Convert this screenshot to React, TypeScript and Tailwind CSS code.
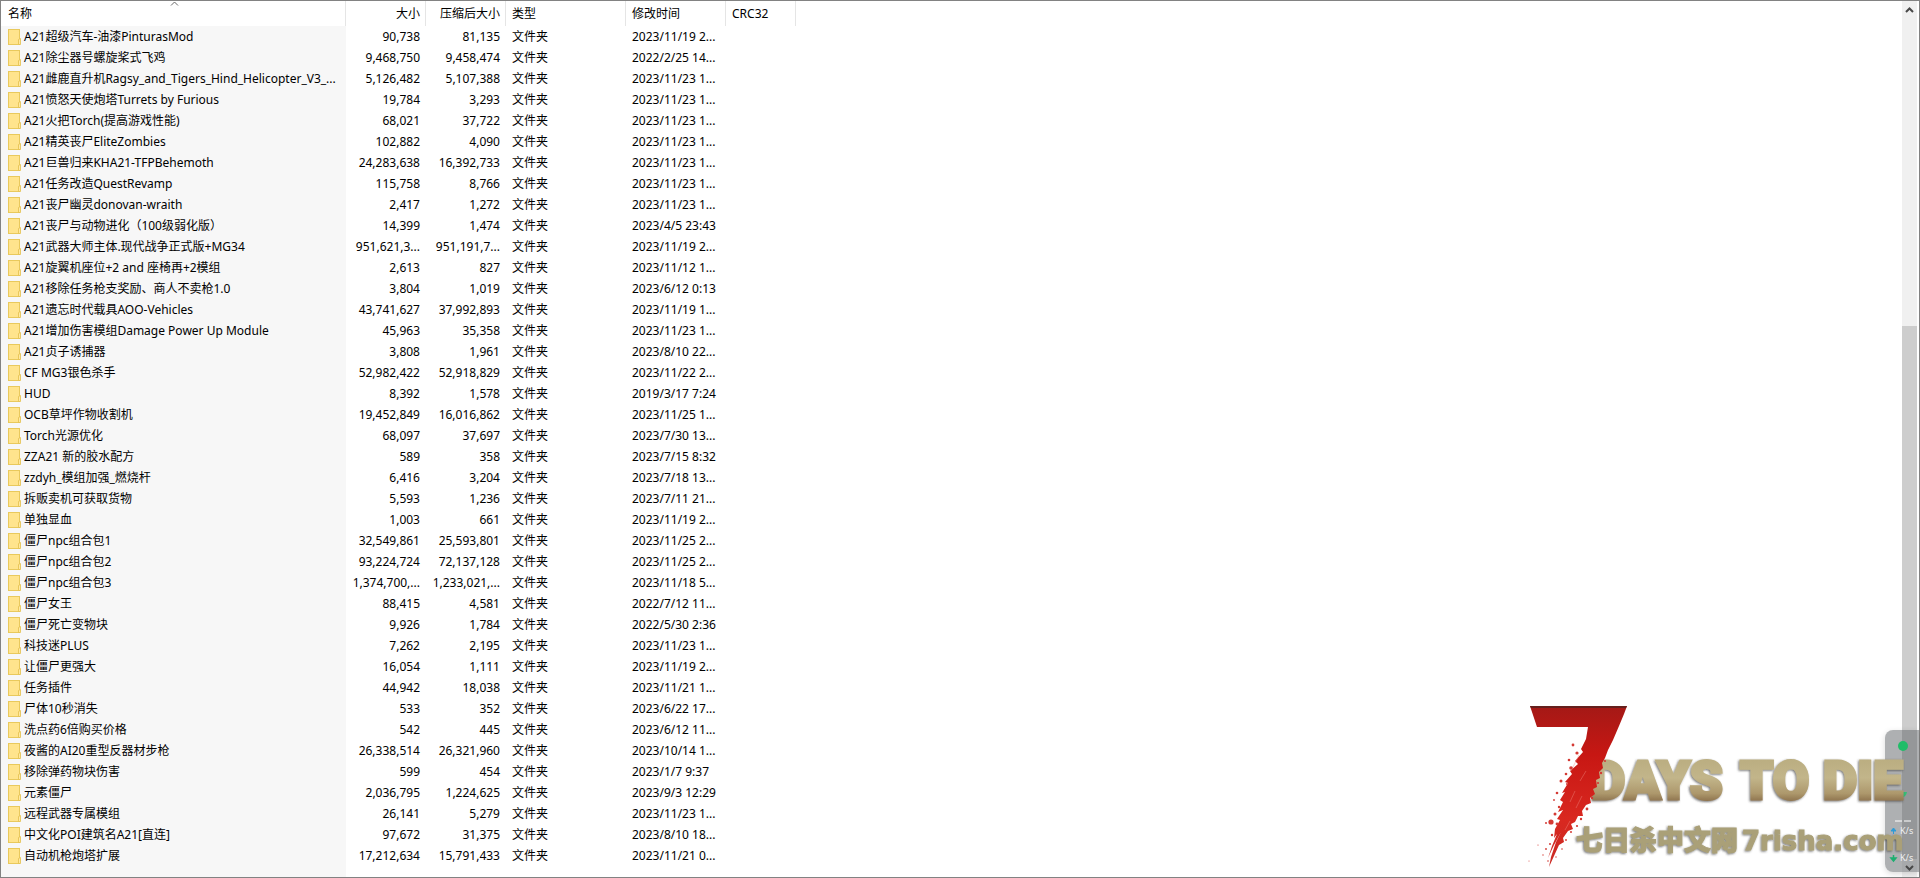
import React from "react";

type Entry = [name: string, size: string, packed: string, modified: string];

const entries: Entry[] = [
  ["A21超级汽车-油漆PinturasMod", "90,738", "81,135", "2023/11/19 2..."],
  ["A21除尘器号螺旋桨式飞鸡", "9,468,750", "9,458,474", "2022/2/25 14..."],
  ["A21雌鹿直升机Ragsy_and_Tigers_Hind_Helicopter_V3_...", "5,126,482", "5,107,388", "2023/11/23 1..."],
  ["A21愤怒天使炮塔Turrets by Furious", "19,784", "3,293", "2023/11/23 1..."],
  ["A21火把Torch(提高游戏性能)", "68,021", "37,722", "2023/11/23 1..."],
  ["A21精英丧尸EliteZombies", "102,882", "4,090", "2023/11/23 1..."],
  ["A21巨兽归来KHA21-TFPBehemoth", "24,283,638", "16,392,733", "2023/11/23 1..."],
  ["A21任务改造QuestRevamp", "115,758", "8,766", "2023/11/23 1..."],
  ["A21丧尸幽灵donovan-wraith", "2,417", "1,272", "2023/11/23 1..."],
  ["A21丧尸与动物进化（100级弱化版）", "14,399", "1,474", "2023/4/5 23:43"],
  ["A21武器大师主体.现代战争正式版+MG34", "951,621,3...", "951,191,7...", "2023/11/19 2..."],
  ["A21旋翼机座位+2 and 座椅再+2模组", "2,613", "827", "2023/11/12 1..."],
  ["A21移除任务枪支奖励、商人不卖枪1.0", "3,804", "1,019", "2023/6/12 0:13"],
  ["A21遗忘时代载具AOO-Vehicles", "43,741,627", "37,992,893", "2023/11/19 1..."],
  ["A21增加伤害模组Damage Power Up Module", "45,963", "35,358", "2023/11/23 1..."],
  ["A21贞子诱捕器", "3,808", "1,961", "2023/8/10 22..."],
  ["CF MG3银色杀手", "52,982,422", "52,918,829", "2023/11/22 2..."],
  ["HUD", "8,392", "1,578", "2019/3/17 7:24"],
  ["OCB草坪作物收割机", "19,452,849", "16,016,862", "2023/11/25 1..."],
  ["Torch光源优化", "68,097", "37,697", "2023/7/30 13..."],
  ["ZZA21 新的胶水配方", "589", "358", "2023/7/15 8:32"],
  ["zzdyh_模组加强_燃烧杆", "6,416", "3,204", "2023/7/18 13..."],
  ["拆贩卖机可获取货物", "5,593", "1,236", "2023/7/11 21..."],
  ["单独显血", "1,003", "661", "2023/11/19 2..."],
  ["僵尸npc组合包1", "32,549,861", "25,593,801", "2023/11/25 2..."],
  ["僵尸npc组合包2", "93,224,724", "72,137,128", "2023/11/25 2..."],
  ["僵尸npc组合包3", "1,374,700,...", "1,233,021,...", "2023/11/18 5..."],
  ["僵尸女王", "88,415", "4,581", "2022/7/12 11..."],
  ["僵尸死亡变物块", "9,926", "1,784", "2022/5/30 2:36"],
  ["科技迷PLUS", "7,262", "2,195", "2023/11/23 1..."],
  ["让僵尸更强大", "16,054", "1,111", "2023/11/19 2..."],
  ["任务插件", "44,942", "18,038", "2023/11/21 1..."],
  ["尸体10秒消失", "533", "352", "2023/6/22 17..."],
  ["洗点药6倍购买价格", "542", "445", "2023/6/12 11..."],
  ["夜酱的AI20重型反器材步枪", "26,338,514", "26,321,960", "2023/10/14 1..."],
  ["移除弹药物块伤害", "599", "454", "2023/1/7 9:37"],
  ["元素僵尸", "2,036,795", "1,224,625", "2023/9/3 12:29"],
  ["远程武器专属模组", "26,141", "5,279", "2023/11/23 1..."],
  ["中文化POI建筑名A21[直连]", "97,672", "31,375", "2023/8/10 18..."],
  ["自动机枪炮塔扩展", "17,212,634", "15,791,433", "2023/11/21 0..."],
];

function FolderIcon() {
  return (
    <svg className="h-4 w-[13px] shrink-0" viewBox="0 0 13 16" aria-hidden="true">
      <rect x="0.5" y="0.5" width="11" height="15" fill="#ffe48d" stroke="#e9c95c" />
      <path d="M10.5 15.5V10.5L12.5 9.5V15.5Z" fill="#ffe9a2" stroke="#e3bf4b" strokeWidth="0.8" />
    </svg>
  );
}

function Chevron({ down = false }: { down?: boolean }) {
  return (
    <svg className="h-[6px] w-[9px]" viewBox="0 0 9 6" aria-hidden="true">
      <path d={down ? "M1 1L4.5 4.5L8 1" : "M1 5L4.5 1.5L8 5"} fill="none" stroke="#484848" strokeWidth="2" />
    </svg>
  );
}

const headCell = "h-[25px] border-r border-[#e5e5e5] bg-white p-0 font-normal";

function FileTable() {
  return (
    <table className="w-[795px] table-fixed border-separate border-spacing-0 text-xs leading-[21px] text-black">
      <colgroup>
        <col className="w-[345px]" />
        <col className="w-[80px]" />
        <col className="w-[80px]" />
        <col className="w-[120px]" />
        <col className="w-[100px]" />
        <col className="w-[70px]" />
      </colgroup>
      <thead>
        <tr>
          <th className={headCell} aria-sort="ascending">
            <button type="button" className="relative block h-[25px] w-full pl-[7px] text-left">
              名称
              <svg className="absolute left-[169px] top-0 h-[5px] w-[9px]" viewBox="0 0 9 5" aria-hidden="true">
                <path d="M1 4.5L4.5 1L8 4.5" fill="none" stroke="#6a6a6a" />
              </svg>
            </button>
          </th>
          <th className={headCell}><button type="button" className="block h-[25px] w-full pr-[5px] text-right">大小</button></th>
          <th className={headCell}><button type="button" className="block h-[25px] w-full pr-[5px] text-right">压缩后大小</button></th>
          <th className={headCell}><button type="button" className="block h-[25px] w-full pl-[6px] text-left">类型</button></th>
          <th className={headCell}><button type="button" className="block h-[25px] w-full pl-[6px] text-left">修改时间</button></th>
          <th className={headCell}><button type="button" className="block h-[25px] w-full pl-[6px] text-left">CRC32</button></th>
        </tr>
      </thead>
      <tbody>
        {entries.map(([name, size, packed, modified]) => (
          <tr key={name} className="whitespace-nowrap">
            <td className="h-[21px] bg-[#f7f7f7] p-0">
              <div className="flex h-[21px] items-center gap-[3px] pl-[7px]">
                <FolderIcon />
                <span>{name}</span>
              </div>
            </td>
            <td className="p-0 pr-[6px] text-right"><div className="h-[21px]">{size}</div></td>
            <td className="p-0 pr-[6px] text-right"><div className="h-[21px]">{packed}</div></td>
            <td className="p-0 pl-[6px]"><div className="h-[21px]">文件夹</div></td>
            <td className="p-0 pl-[6px]"><div className="h-[21px]">{modified}</div></td>
            <td className="p-0" />
          </tr>
        ))}
        <tr>
          <td className="h-[11px] bg-[#f7f7f7] p-0" />
          <td colSpan={5} className="p-0" />
        </tr>
      </tbody>
    </table>
  );
}

function ScrollBar() {
  return (
    <div className="mr-[2px] flex w-[15px] shrink-0 flex-col bg-[#f0f0f0]">
      <button type="button" aria-label="向上滚动" className="flex h-[18px] items-center justify-center">
        <Chevron />
      </button>
      <div className="h-[307px]" />
      <div className="flex-1 bg-[#cdcdcd]" />
      <button type="button" aria-label="向下滚动" className="relative z-10 flex h-[18px] items-center justify-center">
        <Chevron down />
      </button>
    </div>
  );
}

function SpeedWidget() {
  return (
    <div className="absolute bottom-[5px] right-0 h-[142px] w-[34px] rounded-l-lg bg-[#5e6266]/50 shadow-[0_2px_6px_rgba(0,0,0,0.15)]">
      <svg className="h-full w-full" viewBox="0 0 34 142" aria-hidden="true">
        <circle cx="18" cy="16" r="5" fill="#20bd68" />
        <path d="M12 62H22C21 69 13 69 12 62Z" fill="#35bd76" />
        <path d="M11 91H18M20 91H27" transform="translate(-1 0)" stroke="#fff" />
        <path d="M8.500 104V99M6 101L8.500 98L11 101Z" fill="#2e9bd6" stroke="#2e9bd6" />
        <path d="M8.500 125V130M6 128L8.500 131L11 128Z" fill="#1dae70" stroke="#1dae70" strokeWidth="1.500" />
        <g fill="#fff" fillOpacity="0.85" fontSize="9" fontFamily="Noto Sans, sans-serif">
          <text x="15" y="104">K/s</text>
          <text x="15" y="131">K/s</text>
        </g>
      </svg>
    </div>
  );
}

const splatter: [number, number, number][] = [
  [52, 50, 1.4], [56, 58, 1.6], [48, 65, 1.3], [50, 73, 1.8], [45, 79, 1.3], [40, 86, 1.5], [46, 89, 1],
  [36, 98, 1.3], [33, 105, 0.9], [38, 112, 1.2], [34, 119, 1.5], [30, 127, 2.6], [25, 128, 1], [36, 129, 1.4],
  [31, 140, 1.2], [29, 149, 1], [25, 154, 0.9], [22, 160, 0.7], [27, 166, 0.8], [8, 166, 0.5], [17, 150, 0.6],
  [84, 66, 1.1], [80, 78, 1.2], [77, 88, 1.1], [71, 103, 1.2], [66, 114, 1.4], [60, 124, 1.2], [56, 131, 1.1],
  [50, 137, 1], [45, 145, 0.9], [41, 154, 0.8], [35, 162, 0.7],
];

function SevenDaysLogo() {
  return (
    <svg className="absolute bottom-[-1px] right-[8px] h-[183px] w-[390px]" viewBox="0 0 390 183" role="img" aria-label="7 DAYS TO DIE 七日杀中文网">
      <defs>
        <linearGradient id="stone" x1="0" y1="0" x2="0" y2="1">
          <stop offset="0" stopColor="#b7aa7c" />
          <stop offset="0.45" stopColor="#c2b58a" />
          <stop offset="0.7" stopColor="#ad986c" />
          <stop offset="0.85" stopColor="#886c48" />
        </linearGradient>
        <linearGradient id="blood" x1="0" y1="0" x2="0" y2="1">
          <stop offset="0" stopColor="#a41916" />
          <stop offset="0.3" stopColor="#c71713" />
          <stop offset="0.7" stopColor="#d92820" />
          <stop offset="1" stopColor="#c92a24" />
        </linearGradient>
        <filter id="drop" x="-5%" y="-10%" width="112%" height="125%">
          <feDropShadow dx="-1" dy="1" stdDeviation="1" floodColor="#3b3b3b" floodOpacity="0.7" />
        </filter>
      </defs>
      <g
        filter="url(#drop)"
        fill="url(#stone)"
        stroke="url(#stone)"
        strokeWidth="3"
        fontFamily="Roboto, sans-serif"
        fontWeight="900"
        fontSize="53"
      >
        <text x="70" y="104">DAYS</text>
        <text x="219" y="104">TO</text>
        <text x="302" y="104">DIE</text>
      </g>
      <g filter="url(#drop)" fill="#aaa078" stroke="#aaa078" fontWeight="900">
        <text x="55" y="155" fontSize="27" fontFamily="Noto Sans CJK SC, sans-serif">七日杀中文网</text>
        <text x="221" y="155" fontSize="26" fontFamily="DejaVu Sans, sans-serif">7risha.com</text>
      </g>
      <path
        fill="url(#blood)"
        d="M9 11H106L103 19L98 31L92 45L87 55L84 63L81 68L82 73L78 77L79 83L75 85L76 92L72 94L74 99L69 103L70 108L65 110L61 116L62 121L57 121L54 127L50 129L52 134L47 136L42 143L43 147L38 150L33 161L28 172L30 162L35 147L40 137L33 150L27 163L31 151L36 139L33 143L34 134L39 125L36 124L42 115L37 117L42 107L39 105L44 97L41 98L47 88L44 87L51 79L49 76L57 69L54 66L62 57L60 54L65 44L67 32H16Z"
      />
      <path d="M9 11H106L105 13H10Z" fill="#64201d" />
      <path d="M58 60L50 76M65 76L59 86M54 96L49 107M61 101L55 113M49 126L44 135" stroke="#ef8b84" strokeWidth="0.7" opacity="0.6" />
      {splatter.map(([cx, cy, r]) => (
        <circle key={cx + "-" + cy} cx={cx} cy={cy} r={r} fill="#d43a34" />
      ))}
    </svg>
  );
}

export default function App() {
  return (
    <main className="relative flex min-h-screen justify-between border border-[#828282] bg-white font-['Noto_Sans','Noto_Sans_CJK_SC',sans-serif]">
      <FileTable />
      <ScrollBar />
      <SpeedWidget />
      <SevenDaysLogo />
    </main>
  );
}
